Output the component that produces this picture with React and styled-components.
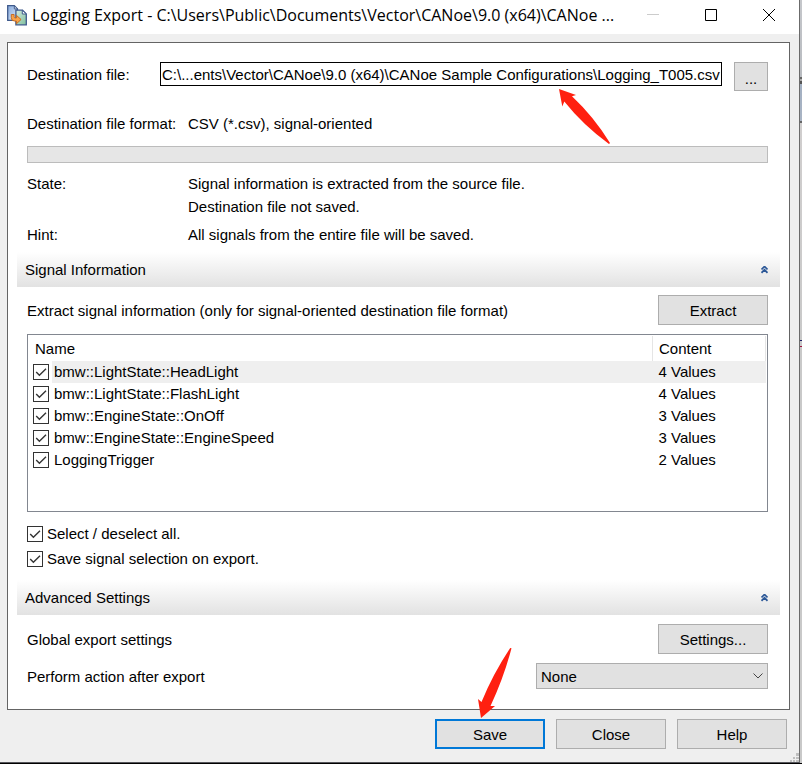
import { useState } from 'react';
import styled, { createGlobalStyle } from 'styled-components';

const initialSignals = [
  { name: 'bmw::LightState::HeadLight', content: '4 Values', checked: true },
  { name: 'bmw::LightState::FlashLight', content: '4 Values', checked: true },
  { name: 'bmw::EngineState::OnOff', content: '3 Values', checked: true },
  { name: 'bmw::EngineState::EngineSpeed', content: '3 Values', checked: true },
  { name: 'LoggingTrigger', content: '2 Values', checked: true },
];

function AppIcon() {
  return (
    <svg width="20" height="21" viewBox="0 0 20 21" aria-hidden="true">
      <defs>
        <linearGradient id="docBlue" x1="0" y1="0" x2="1" y2="1">
          <stop offset="0" stopColor="#86a9dc" />
          <stop offset="1" stopColor="#dceaf8" />
        </linearGradient>
        <linearGradient id="docGreen" x1="0" y1="0" x2="1" y2="1">
          <stop offset="0" stopColor="#d5ebe0" />
          <stop offset="1" stopColor="#7fbf9c" />
        </linearGradient>
      </defs>
      <path d="M0.7 0.7h6.6l3.2 3.2v11.4H0.7z" fill="url(#docBlue)" stroke="#3f5a8c" strokeWidth="1.3" />
      <path d="M7.3 0.7v3.2h3.2z" fill="#fff" stroke="#3f5a8c" />
      <path d="M8.9 5.2h6.6l3.8 3.8v10.8H8.9z" fill="url(#docGreen)" stroke="#3f5a8c" strokeWidth="1.3" />
      <path d="M15.3 5.2v3.8h4z" fill="#fff" stroke="#3f5a8c" />
      <path d="M4.300 9.500h2.800v2.200q0 1.300 1.300 1.300h1V10.300l4.700 4.200-4.700 4.300v-2.700H7.800q-3.500 0-3.500-3.500z" fill="#f9a44a" stroke="#c2651a" strokeWidth="0.9" />
    </svg>
  );
}

function Collapse() {
  return (
    <svg width="7" height="8" viewBox="0 0 7 8" fill="none" stroke="#2b5797" strokeWidth="1.7" aria-hidden="true">
      <path d="M0.5 3.500l3-3 3 3M0.5 6.800l3-3 3 3" />
    </svg>
  );
}

function App() {
  const [signals, setSignals] = useState(initialSignals);
  const [saveSelection, setSaveSelection] = useState(true);
  const allChecked = signals.every((s) => s.checked);
  const toggleSignal = (name) => {
    setSignals(signals.map((s) => (s.name === name ? { ...s, checked: !s.checked } : s)));
  };
  const toggleAll = () => {
    setSignals(signals.map((s) => ({ ...s, checked: !allChecked })));
  };
  return (
    <Desktop>
      <GlobalStyle />
      <Window>
        <TitleBar>
          <AppIcon />
          <Title>Logging Export - C:\Users\Public\Documents\Vector\CANoe\9.0 (x64)\CANoe ...</Title>
          <WindowButton aria-label="Minimize" disabled>
            <svg width="12" height="12" stroke="#ccc"><path d="M0 5.5h12" /></svg>
          </WindowButton>
          <WindowButton aria-label="Maximize">
            <svg width="12" height="12" fill="none" stroke="#000"><path d="M0.5 0.5h11v11h-11z" /></svg>
          </WindowButton>
          <WindowButton aria-label="Close window">
            <svg width="12" height="12" stroke="#000"><path d="M0 0l12 12M12 0L0 12" /></svg>
          </WindowButton>
        </TitleBar>
        <Panel>
          <Destination>
            <FileRow>
              <FileLabel htmlFor="file">Destination file:</FileLabel>
              <FileField>
                <FileInput id="file" defaultValue="C:\...ents\Vector\CANoe\9.0 (x64)\CANoe Sample Configurations\Logging_T005.csv" />
                <FileArrow width="52" height="56" aria-hidden="true">
                  <path d="M0 0L17 6l-4 1.300Q35 28 51 54l-1 1Q24 36 5.300 12.500l-2 5z" />
                </FileArrow>
              </FileField>
              <BrowseButton aria-label="Browse">...</BrowseButton>
            </FileRow>
            <InfoRow>
              <dt>Destination file format:</dt>
              <dd>CSV (*.csv), signal-oriented</dd>
            </InfoRow>
            <Progress role="progressbar" aria-label="Export progress" aria-valuenow={0} />
            <InfoRow>
              <dt>State:</dt>
              <dd>Signal information is extracted from the source file.<br />Destination file not saved.</dd>
            </InfoRow>
            <InfoRow>
              <dt>Hint:</dt>
              <dd>All signals from the entire file will be saved.</dd>
            </InfoRow>
          </Destination>
          <SectionHeader>
            <h2>Signal Information</h2>
            <CollapseButton aria-label="Collapse signal information"><Collapse /></CollapseButton>
          </SectionHeader>
          <SectionBody>
            <SettingRow>
              <span>Extract signal information (only for signal-oriented destination file format)</span>
              <Button>Extract</Button>
            </SettingRow>
            <ListBox>
              <SignalTable>
                <thead>
                  <tr>
                    <th colSpan={2}>Name</th>
                    <ContentHead>Content</ContentHead>
                  </tr>
                </thead>
                <tbody>
                  {signals.map((s, i) => (
                    <SignalRow key={s.name} $active={i === 0}>
                      <CheckCell>
                        <Checkbox id={s.name} type="checkbox" checked={s.checked} onChange={() => toggleSignal(s.name)} />
                      </CheckCell>
                      <NameCell><label htmlFor={s.name}>{s.name}</label></NameCell>
                      <ContentCell>{s.content}</ContentCell>
                    </SignalRow>
                  ))}
                </tbody>
              </SignalTable>
            </ListBox>
            <Options>
              <CheckLabel>
                <Checkbox type="checkbox" checked={allChecked} onChange={toggleAll} />
                Select / deselect all.
              </CheckLabel>
              <CheckLabel>
                <Checkbox type="checkbox" checked={saveSelection} onChange={() => setSaveSelection(!saveSelection)} />
                Save signal selection on export.
              </CheckLabel>
            </Options>
          </SectionBody>
          <SectionHeader>
            <h2>Advanced Settings</h2>
            <CollapseButton aria-label="Collapse advanced settings"><Collapse /></CollapseButton>
          </SectionHeader>
          <SectionBody>
            <SettingRow>
              <span>Global export settings</span>
              <Button>Settings...</Button>
            </SettingRow>
            <SettingRow>
              <label htmlFor="action">Perform action after export</label>
              <SelectBox>
                <select id="action" defaultValue="None">
                  <option>None</option>
                </select>
                <svg width="10" height="6" fill="none" stroke="#444" aria-hidden="true"><path d="M0.5 0.5L5 5l4.500-4.500" /></svg>
              </SelectBox>
            </SettingRow>
          </SectionBody>
        </Panel>
        <Footer>
          <SaveSlot>
            <Button $primary>Save</Button>
            <SaveArrow width="34" height="72" aria-hidden="true">
              <path d="M3 71L17 59h-4.500Q26 30 33.500 1.200L32.200 1Q15 27 3.500 55L0 52z" />
            </SaveArrow>
          </SaveSlot>
          <Button>Close</Button>
          <Button>Help</Button>
          <SizeGrip width="9" height="9" fill="#bfbfbf" aria-hidden="true">
            <path d="M6 0h3v3H6zM3 4h2v2H3zM6 4h3v2H6zM0 7h2v2H0zM3 7h2v2H3zM6 7h3v2H6z" />
          </SizeGrip>
        </Footer>
      </Window>
    </Desktop>
  );
}

const GlobalStyle = createGlobalStyle`
*{
  box-sizing:border-box;
}
body{
  margin:0;
  background:#000;
  color:#000;
  font:15px/23px "Liberation Sans", Arial, sans-serif;
}
button, input, select{
  font:inherit;
  color:inherit;
}
svg{
  display:block;
  flex:none;
}
`
/* the sliver on the right is the application behind the dialog */
const Desktop = styled.div`
padding:0 2px 1px 0;
background:
linear-gradient(#000, #000) bottom / 100% 1px no-repeat,
linear-gradient(#c5c7cb 0, #b8bbc0 77px, #666 77px, #666 79px, #aaa 79px, #aaa 81px, #555 81px, #555 84px,
#a3b0c2 84px, #a9b4c4 121px, #666 121px, #666 123px, #d0cece 123px, #c9c9c9 340px, #1d1d66 340px, #1d1d66 341px,
#c9c9c9 341px, #c9c9c9 346px, #a0143c 346px, #a0143c 347px, #c9c9c9 347px);
`
const Window = styled.main`
display:flex;
flex-direction:column;
background:#efefef;
border-right:1px solid #6b6b6b;
border-bottom:1px solid #55555a;
`
const TitleBar = styled.header`
display:flex;
align-items:center;
height:34px;
padding:0 1px 4px 7px;
background:#fff;
`
const Title = styled.h1`
flex:1;
min-width:0;
margin:0 0 0 5px;
overflow:hidden;
white-space:nowrap;
font:400 16px/24px "Open Sans", "Noto Sans", sans-serif;
`
const WindowButton = styled.button`
display:flex;
align-items:center;
justify-content:center;
width:58px;
height:30px;
padding:0;
border:0;
background:none;
`
const Panel = styled.section`
margin:8px 9px 0 7px;
padding:0 9px 20px;
background:#fff;
border:1px solid #646464;
`
const Destination = styled.div`
display:flex;
flex-direction:column;
gap:5px;
padding:19px 12px 6px 10px;
`
const FileRow = styled.div`
display:flex;
align-items:flex-start;
`
const FileLabel = styled.label`
width:133px;
line-height:26px;
`
const FileField = styled.div`
position:relative;
flex:1;
`
const FileInput = styled.input`
display:block;
width:100%;
height:24px;
padding:0 0 0 1px;
border:1px solid #000;
border-radius:0;
background:#fff;
`
const Arrow = styled.svg`
position:absolute;
z-index:1;
fill:#ff2010;
pointer-events:none;
`
const FileArrow = styled(Arrow)`
top:27px;
right:111px;
`
const Button = styled.button`
width:110px;
height:30px;
padding:0;
border:${(p) => (p.$primary ? '2px solid #0078d7' : '1px solid #adadad')};
background:#e1e1e1;
`
const BrowseButton = styled(Button)`
width:34px;
height:29px;
margin-left:12px;
padding-top:4px;
`
const InfoRow = styled.dl`
display:flex;
margin:0;
dt{
  width:161px;
}
dd{
  margin:0;
}
${FileRow} + &{
  padding:16px 0 6px;
}
`
const Progress = styled.div`
height:17px;
margin-bottom:4px;
background:#e6e6e6;
border:1px solid #bcbcbc;
`
const SectionHeader = styled.div`
display:flex;
align-items:center;
justify-content:space-between;
height:35px;
padding:0 12px 0 8px;
background:linear-gradient(#fff, #e2e2e2);
h2{
  margin:0;
  font-size:15px;
  font-weight:400;
}
`
const CollapseButton = styled.button`
padding:0;
border:0;
background:none;
`
const SectionBody = styled.div`
display:flex;
flex-direction:column;
gap:9px;
padding:8px 12px 0 10px;
${Destination} ~ & ~ &{
  padding-top:9px;
}
`
const SettingRow = styled.div`
display:flex;
align-items:center;
justify-content:space-between;
`
const ListBox = styled.div`
height:178px;
padding:1px;
border:1px solid #828790;
overflow:auto;
`
const SignalTable = styled.table`
width:100%;
table-layout:auto;
border-collapse:collapse;
line-height:22px;
th, td{
  padding:0;
  text-align:left;
  font-weight:400;
}
th{
  height:25px;
  padding:1px 6px 0;
  border-right:1px solid #e5e5e5;
}
`
const ContentHead = styled.th`
width:113px;
`
const SignalRow = styled.tr`
height:22px;
td + td{
  background:${(p) => (p.$active ? '#efefef' : 'none')};
}
`
const CheckCell = styled.td`
width:23px;
&&{
  padding-left:4px;
}
`
const NameCell = styled.td`
&&{
  padding-left:2px;
}
`
const ContentCell = styled.td`
&&{
  padding-left:6px;
}
`
const Checkbox = styled.input`
appearance:none;
display:block;
flex:none;
width:16px;
height:16px;
margin:0;
border:1px solid #333;
background:#fff;
&:checked{
  background:#fff url("data:image/svg+xml,%3Csvg xmlns='http://www.w3.org/2000/svg' viewBox='0 0 14 14' fill='none' stroke='%23333' stroke-width='1.4'%3E%3Cpath d='M2.200 7l3.200 3.300L12 3.700'/%3E%3C/svg%3E");
}
`
const Options = styled.div`
display:flex;
flex-direction:column;
gap:2px;
padding:1px 0 10px;
`
const CheckLabel = styled.label`
display:flex;
align-items:center;
gap:4px;
`
const SelectBox = styled.div`
position:relative;
width:232px;
select{
  display:block;
  appearance:none;
  width:100%;
  height:26px;
  padding:0 24px 0 4px;
  border:1px solid #adadad;
  border-radius:0;
  background:#e1e1e1;
}
svg{
  position:absolute;
  right:5px;
  top:10px;
  pointer-events:none;
}
`
const Footer = styled.footer`
position:relative;
display:flex;
justify-content:flex-end;
gap:11px;
padding:9px 12px 13px;
`
const SaveSlot = styled.div`
position:relative;
`
const SaveArrow = styled(Arrow)`
left:43px;
bottom:30px;
`
const SizeGrip = styled.svg`
position:absolute;
right:0;
bottom:0;
`

export default App
